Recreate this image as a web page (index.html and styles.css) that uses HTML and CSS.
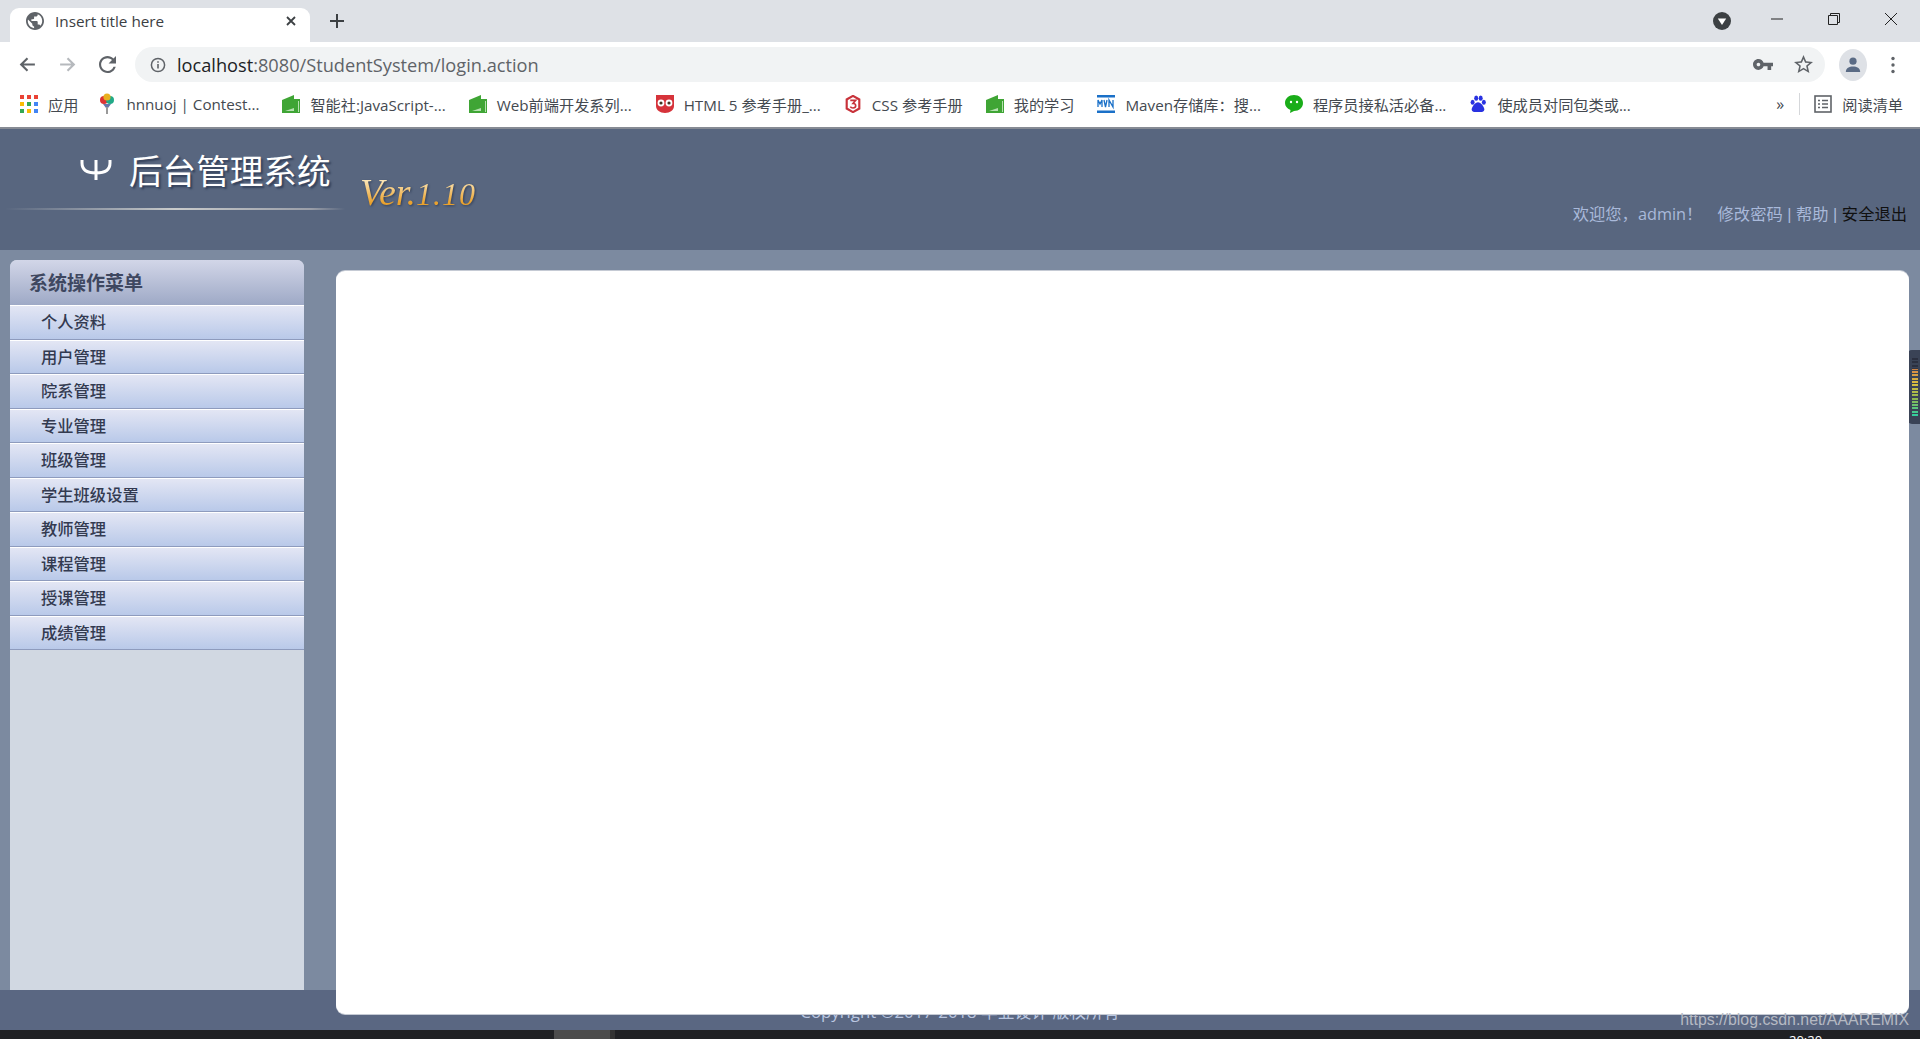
FILE: index.html
```html
<!DOCTYPE html>
<html lang="en">
<head>
    <meta charset="UTF-8">
    <meta name="viewport" content="width=device-width, initial-scale=1.0">
    <title>Insert title here</title>
    <link rel="stylesheet" href="styles.css">
</head>
<body>

    <!-- Browser tabs -->
    <div class="tabStrip">
        <div class="tab">
            <svg class="tabIcon" viewBox="2 2 20 20"><path fill="#5f6368" d="M12 2C6.48 2 2 6.48 2 12s4.48 10 10 10 10-4.48 10-10S17.52 2 12 2zm-1 17.93c-3.95-.49-7-3.85-7-7.93 0-.62.08-1.21.21-1.79L9 15v1c0 1.1.9 2 2 2v1.93zm6.9-2.54c-.26-.81-1-1.39-1.9-1.39h-1v-3c0-.55-.45-1-1-1H8v-2h2c.55 0 1-.45 1-1V7h2c1.1 0 2-.9 2-2v-.41c2.93 1.19 5 4.06 5 7.41 0 2.08-.8 3.97-2.1 5.39z"/></svg>
            <span class="tabTitle">Insert title here</span>
            <svg class="tabClose" viewBox="0 0 12 12"><path d="M2 2l8 8M10 2l-8 8" stroke="#3c4043" stroke-width="1.8"/></svg>
        </div>
        <svg class="newTab" viewBox="0 0 16 16"><path d="M8 1v14M1 8h14" stroke="#3c4043" stroke-width="2"/></svg>
        <div class="tabStripRight">
            <svg class="tabSearch" viewBox="0 0 18 18"><circle cx="9" cy="9" r="9" fill="#3c4043"/><path d="M4.8 6.5h8.4L9 13z" fill="#fff"/></svg>
            <svg class="winBtn" viewBox="0 0 14 14"><path d="M1 7h12" stroke="#222" stroke-width="1"/></svg>
            <svg class="winBtn" viewBox="0 0 14 14"><path d="M1.5 3.5h9v9h-9zM3.5 3.5v-2h9v9h-2" fill="none" stroke="#222" stroke-width="1"/></svg>
            <svg class="winBtn" viewBox="0 0 14 14"><path d="M1 1l12 12M13 1L1 13" stroke="#222" stroke-width="1"/></svg>
        </div>
    </div>

    <!-- Address bar -->
    <div class="toolbar">
        <svg class="navIcon" viewBox="0 0 18 18"><path d="M16 9H3M9 3L3 9l6 6" fill="none" stroke="#5f6368" stroke-width="2"/></svg>
        <svg class="navIcon" viewBox="0 0 18 18"><path d="M2 9h13M9 3l6 6-6 6" fill="none" stroke="#b6b9bd" stroke-width="2"/></svg>
        <svg class="navIcon reload" viewBox="4 4 16 16"><path fill="#5f6368" d="M17.65 6.35C16.2 4.9 14.21 4 12 4c-4.42 0-7.99 3.58-7.99 8s3.57 8 7.99 8c3.73 0 6.84-2.55 7.73-6h-2.08c-.82 2.33-3.04 4-5.65 4-3.31 0-6-2.69-6-6s2.69-6 6-6c1.66 0 3.14.69 4.22 1.78L13 11h7V4l-2.35 2.35z"/></svg>
        <div class="addressBar">
            <svg class="infoIcon" viewBox="0 0 16 16"><circle cx="8" cy="8" r="6.6" fill="none" stroke="#5f6368" stroke-width="1.5"/><path d="M8 7v4.5M8 4.2v1.6" stroke="#5f6368" stroke-width="1.6"/></svg>
            <span class="url"><b>localhost</b>:8080/StudentSystem/login.action</span>
            <svg class="keyIcon" viewBox="1 6 22 12"><path fill="#5f6368" d="M12.65 10C11.83 7.67 9.61 6 7 6c-3.31 0-6 2.69-6 6s2.69 6 6 6c2.61 0 4.83-1.67 5.65-4H17v4h4v-4h2v-4H12.65zM7 14c-1.1 0-2-.9-2-2s.9-2 2-2 2 .9 2 2-.9 2-2 2z"/></svg>
            <svg class="starIcon" viewBox="2 2 20 20"><path fill="#5f6368" d="M22 9.24l-7.19-.62L12 2 9.19 8.63 2 9.24l5.46 4.73L5.82 21 12 17.27 18.18 21l-1.63-7.03L22 9.24zM12 15.4l-3.76 2.27 1-4.28-3.32-2.88 4.38-.38L12 6.1l1.71 4.04 4.38.38-3.32 2.88 1 4.28L12 15.4z"/></svg>
        </div>
        <div class="avatar">
            <svg viewBox="0 0 18 18"><circle cx="9" cy="5.2" r="3.6" fill="#5a6b85"/><path d="M1.8 16c0-4 3.4-5.6 7.2-5.6s7.2 1.6 7.2 5.6z" fill="#5a6b85"/></svg>
        </div>
        <svg class="dots" viewBox="0 0 4 18"><circle cx="2" cy="2.5" r="1.7" fill="#5f6368"/><circle cx="2" cy="9" r="1.7" fill="#5f6368"/><circle cx="2" cy="15.5" r="1.7" fill="#5f6368"/></svg>
    </div>

    <!-- Bookmarks -->
    <div class="bookmarks">
        <a class="mark">
            <svg viewBox="0 0 18 18">
                <rect x="0" y="0" width="4" height="4" fill="#ea4335"/><rect x="7" y="0" width="4" height="4" fill="#ea4335"/><rect x="14" y="0" width="4" height="4" fill="#ea4335"/>
                <rect x="0" y="7" width="4" height="4" fill="#fbbc05"/><rect x="7" y="7" width="4" height="4" fill="#34a853"/><rect x="14" y="7" width="4" height="4" fill="#4285f4"/>
                <rect x="0" y="14" width="4" height="4" fill="#34a853"/><rect x="7" y="14" width="4" height="4" fill="#fbbc05"/><rect x="14" y="14" width="4" height="4" fill="#4285f4"/>
            </svg>
            应用
        </a>
        <a class="mark markOj">
            <svg class="tallIcon" viewBox="0 0 18 22"><circle cx="6" cy="7" r="4" fill="#d33"/><circle cx="12" cy="7" r="4" fill="#2a8"/><circle cx="9" cy="4" r="3.6" fill="#e8b020"/><path d="M5 11h8l-3 4H8z" fill="#67a"/><path d="M9 14v7" stroke="#999" stroke-width="2"/></svg>
            hnnuoj | Contest...
        </a>
        <a class="mark">
            <svg viewBox="0 0 18 18"><path d="M0 5L12 0v4h6v14H0z" fill="#3fa535"/><path d="M16 6h1v11h-1zM3 16l9-3v3z" fill="#b5e0b0"/></svg>
            智能社:JavaScript-...
        </a>
        <a class="mark">
            <svg viewBox="0 0 18 18"><path d="M0 5L12 0v4h6v14H0z" fill="#3fa535"/><path d="M16 6h1v11h-1zM3 16l9-3v3z" fill="#b5e0b0"/></svg>
            Web前端开发系列...
        </a>
        <a class="mark">
            <svg class="wideIcon" viewBox="0 0 20 20"><path d="M1 1h18v11c0 4-4 7-9 7s-9-3-9-7z" fill="#d6333a"/><circle cx="6" cy="9" r="3.4" fill="#fff"/><circle cx="14" cy="9" r="3.4" fill="#fff"/><circle cx="6" cy="9" r="1.6" fill="#432"/><circle cx="14" cy="9" r="1.6" fill="#432"/></svg>
            HTML 5 参考手册_...
        </a>
        <a class="mark">
            <svg viewBox="0 0 18 20"><path d="M9 1l7 4v10l-7 4-7-4V5z" fill="none" stroke="#c8323a" stroke-width="2.4"/><path d="M6 6h6L9 9.5c2 0 3 1 3 2.5s-1.5 2.5-3 2.5-2.5-.5-3-1.5" fill="none" stroke="#c8323a" stroke-width="1.8"/></svg>
            CSS 参考手册
        </a>
        <a class="mark">
            <svg viewBox="0 0 18 18"><path d="M0 5L12 0v4h6v14H0z" fill="#3fa535"/><path d="M16 6h1v11h-1zM3 16l9-3v3z" fill="#b5e0b0"/></svg>
            我的学习
        </a>
        <a class="mark">
            <svg viewBox="0 0 18 18"><rect width="18" height="2.5" fill="#1a70c8"/><rect y="15.5" width="18" height="2.5" fill="#1a70c8"/><path d="M1 12V5l2 4 2-4v7M7 5l1.5 7L10 5M12 12V5l4 7V5" fill="none" stroke="#1a70c8" stroke-width="1.3"/></svg>
            Maven存储库：搜...
        </a>
        <a class="mark">
            <svg class="wideIcon" viewBox="0 0 20 20"><path d="M10 1c5 0 9 3.5 9 8s-4 8-9 8l-4 2 .5-3C3 14.5 1 12 1 9c0-4.5 4-8 9-8z" fill="#1aad19"/><circle cx="7" cy="8" r="1.2" fill="#fff"/><circle cx="13" cy="8" r="1.2" fill="#fff"/></svg>
            程序员接私活必备...
        </a>
        <a class="mark">
            <svg viewBox="0 0 18 20"><ellipse cx="3" cy="8" rx="2.2" ry="2.8" fill="#2932e1"/><ellipse cx="7" cy="3.5" rx="2.2" ry="2.9" fill="#2932e1"/><ellipse cx="12" cy="3.5" rx="2.2" ry="2.9" fill="#2932e1"/><ellipse cx="15.5" cy="8" rx="2.2" ry="2.8" fill="#2932e1"/><path d="M9 8c3 0 7 5 7 8 0 2-2 3-4 3H6c-2 0-4-1-4-3 0-3 4-8 7-8z" fill="#2932e1"/></svg>
            使成员对同包类或...
        </a>
        <div class="markEnd">
            <span class="more">»</span>
            <span class="markSep"></span>
            <a class="mark">
                <svg viewBox="0 0 18 18"><rect x="1" y="1" width="16" height="16" fill="none" stroke="#5f6368" stroke-width="1.6"/><path d="M4 5.5h2M8 5.5h6M4 9h2M8 9h6M4 12.5h2M8 12.5h6" stroke="#5f6368" stroke-width="1.5"/></svg>
                阅读清单
            </a>
        </div>
    </div>

    <!-- Page header -->
    <div class="header">
        <div class="logo">
            <div class="logoTop">
                <svg class="logoMark" viewBox="0 0 32 20"><path d="M2 0v3c0 7 5 10 14 10s14-3 14-10V0M16 0v20" fill="none" stroke="#fff" stroke-width="3"/></svg>
                <span class="logoText">后台管理系统</span>
            </div>
            <div class="logoLine"></div>
        </div>
        <div class="version">Ver.<span class="versionNum">1.10</span></div>
        <div class="userLinks">
            <span class="welcome">欢迎您，admin！</span>
            <span class="links"><a>修改密码</a> | <a>帮助</a> | <a class="logout">安全退出</a></span>
        </div>
    </div>

    <!-- Sidebar and content -->
    <div class="middle">
        <div class="sidebar">
            <div class="menuTitle">系统操作菜单</div>
            <a class="menuItem">个人资料</a>
            <a class="menuItem">用户管理</a>
            <a class="menuItem">院系管理</a>
            <a class="menuItem">专业管理</a>
            <a class="menuItem">班级管理</a>
            <a class="menuItem">学生班级设置</a>
            <a class="menuItem">教师管理</a>
            <a class="menuItem">课程管理</a>
            <a class="menuItem">授课管理</a>
            <a class="menuItem">成绩管理</a>
        </div>
        <div class="content"></div>
    </div>

    <div class="footer">Copyright ©2017-2018 毕业设计 版权所有</div>

    <!-- Windows taskbar, cut off by the bottom of the window -->
    <div class="taskbar">
        <span class="taskActive"></span>
        <span class="taskClock">20:20</span>
    </div>

    <!-- Overlays -->
    <div class="meter"><div class="meterBars"></div></div>
    <div class="watermark">https://blog.csdn.net/AAAREMIX</div>

</body>
</html>
```

FILE: styles.css
```css
html, body {
    height: 100%;
}
body {
    margin: 0;
    display: flex;
    flex-direction: column;
    overflow: hidden;
    font-family: "Open Sans", "Noto Sans CJK SC", sans-serif;
    background-color: #202124;
}

/* browser tabs */
.tabStrip {
    flex: none;
    height: 42px;
    display: flex;
    align-items: flex-end;
    background-color: #dee1e6;
}
.tab {
    width: 300px;
    height: 34px;
    margin-left: 10px;
    display: flex;
    align-items: center;
    box-sizing: border-box;
    padding: 0 13px 8px 16px;
    background-color: #fff;
    border-radius: 9px 9px 0 0;
}
.tabIcon {
    width: 18px;
    height: 18px;
}
.tabTitle {
    flex: 1;
    margin-left: 11px;
    font-size: 15.3px;
    color: #3c4043;
}
.tabClose {
    width: 12px;
    height: 12px;
}
.newTab {
    width: 16px;
    height: 16px;
    margin: 0 0 13px 19px;
}
.tabStripRight {
    flex: 1;
    align-self: stretch;
    display: flex;
    align-items: center;
    justify-content: flex-end;
}
.tabSearch {
    width: 18px;
    height: 18px;
    margin-right: 39px;
}
.winBtn {
    width: 14px;
    height: 14px;
    margin-right: 43px;
    margin-bottom: 4px;
}
.winBtn:last-child {
    margin-right: 22px;
}

/* address bar */
.toolbar {
    flex: none;
    height: 44px;
    display: flex;
    align-items: center;
    padding-left: 18px;
    background-color: #fff;
}
.navIcon {
    width: 19px;
    height: 19px;
    margin-right: 21px;
}
.reload {
    width: 17px;
    height: 17px;
    margin-left: 1px;
}
.addressBar {
    flex: none;
    width: 1690px;
    height: 35px;
    margin: 1px 0 0 -2px;
    display: flex;
    align-items: center;
    box-sizing: border-box;
    padding: 0 12px 0 15px;
    background-color: #f1f3f4;
    border-radius: 18px;
}
.infoIcon {
    width: 16px;
    height: 16px;
}
.url {
    flex: 1;
    margin-left: 11px;
    font-size: 18.2px;
    color: #5f6368;
}
.url b {
    font-weight: normal;
    color: #202124;
}
.keyIcon {
    width: 20px;
    height: 11px;
    margin-right: 21px;
}
.starIcon {
    width: 19px;
    height: 19px;
}
.avatar {
    width: 28px;
    height: 32px;
    margin: 1px 0 0 14px;
    display: flex;
    align-items: center;
    justify-content: center;
    background-color: #dee1e6;
    border-radius: 50%;
}
.avatar svg {
    width: 18px;
    height: 18px;
}
.dots {
    width: 4px;
    height: 18px;
    margin: 1px 0 0 24px;
}

/* bookmarks */
.bookmarks {
    flex: none;
    height: 43px;
    box-sizing: border-box;
    display: flex;
    align-items: center;
    gap: 23px;
    padding: 0 0 5px 20px;
    background-color: #fff;
    border-bottom: 2px solid #868b94;
    font-size: 15.2px;
    color: #444950;
}
.mark {
    flex: none;
    display: flex;
    align-items: center;
    gap: 10px;
    white-space: nowrap;
}
.markOj {
    margin-left: -3px;
}
.mark svg {
    width: 18px;
    height: 18px;
}
.mark .tallIcon {
    height: 22px;
}
.mark .wideIcon {
    width: 20px;
    height: 20px;
    margin-right: -1px;
}
.markEnd {
    flex: 1;
    display: flex;
    align-items: center;
    justify-content: flex-end;
    padding-right: 17px;
}
.more {
    font-size: 16px;
    margin-right: 15px;
}
.markSep {
    width: 1px;
    height: 22px;
    margin-right: 14px;
    background-color: #d5d7da;
}

/* page header */
.header {
    flex: none;
    height: 121px;
    display: flex;
    align-items: flex-start;
    background-color: #58667f;
}
.logo {
    width: 340px;
    margin: 20px 0 0 5px;
}
.logoTop {
    height: 59px;
    display: flex;
    align-items: flex-start;
    padding-left: 75px;
}
.logoMark {
    width: 32px;
    height: 20px;
    margin-top: 11px;
}
.logoText {
    margin-left: 17px;
    font-size: 33.6px;
    line-height: 44px;
    color: #fff;
    text-shadow: 2px 2px 2px #33405a;
}
.logoLine {
    height: 2px;
    background: linear-gradient(to right, transparent, #c9cbcb 50%, #9a9ea8 90%, transparent);
}
.version {
    margin: 40px 0 0 15px;
    font-family: "Liberation Serif", serif;
    font-style: italic;
    font-size: 38px;
    line-height: 46px;
    background: linear-gradient(#fff2d0 15%, #eaa22e 70%);
    -webkit-background-clip: text;
    background-clip: text;
    color: transparent;
    filter: drop-shadow(1px 1px 1px #33405a);
}
.versionNum {
    font-size: 32px;
    letter-spacing: 1px;
}
.userLinks {
    margin: 73px 13px 0 auto;
    font-size: 16.3px;
    line-height: 24px;
    color: #a9b9da;
}
.welcome {
    margin-right: 11px;
}
.links {
    font-family: "Liberation Sans", "Noto Sans CJK SC", sans-serif;
}
.logout {
    color: #101010;
}

/* sidebar and content */
.middle {
    flex: 1;
    min-height: 0;
    display: flex;
    align-items: stretch;
    background-color: #7c8aa0;
}
.sidebar {
    flex: none;
    width: 294px;
    margin: 10px 0 0 10px;
    background-color: #d1d8e2;
    border-radius: 7px 7px 0 0;
}
.menuTitle {
    height: 45px;
    box-sizing: border-box;
    padding-left: 19px;
    font-size: 19px;
    font-weight: bold;
    line-height: 47px;
    color: #3e4760;
    background: linear-gradient(#d2d6e8, #9ea9c6);
    border-radius: 7px 7px 0 0;
}
.menuItem {
    display: block;
    height: 34.5px;
    box-sizing: border-box;
    padding-left: 31px;
    font-size: 16.3px;
    font-weight: 500;
    line-height: 33px;
    color: #333a50;
    background: linear-gradient(#e3e6f4, #b9c9e9);
    border-top: 1px solid #fff;
    border-bottom: 1px solid #8e9bbd;
}
.content {
    flex: none;
    position: relative;
    z-index: 1;
    width: 1573px;
    margin: 21px 0 -24px 32px;
    background-color: #fff;
    border-radius: 9px;
    box-shadow: 0 1px 0 #c5cad4, 0 -1px 0 #c5cad4;
}

/* footer */
.footer {
    flex: none;
    height: 40px;
    font-size: 16.8px;
    line-height: 44px;
    text-align: center;
    color: #b9c6e0;
    background-color: #5a6782;
}

/* taskbar */
.taskbar {
    flex: none;
    height: 9px;
    position: relative;
    overflow: hidden;
    background-color: #202124;
}
.taskActive {
    display: block;
    width: 56px;
    height: 9px;
    margin-left: 554px;
    background-color: #4c4c4c;
    border-right: 5px solid #333;
}
.taskClock {
    position: absolute;
    left: 1789px;
    top: 4px;
    font-size: 13px;
    line-height: 13px;
    color: #fff;
}

/* overlays */
.meter {
    position: absolute;
    left: 1907px;
    top: 350px;
    width: 13px;
    height: 74px;
    background-color: #3a4356;
    border-radius: 5px 0 0 5px;
}
.meterBars {
    width: 6px;
    height: 58px;
    margin: 8px 0 0 5px;
    background:
        repeating-linear-gradient(transparent 0, transparent 2px, #3a4356 2px, #3a4356 3.3px),
        linear-gradient(#2b3040 0, #2b3040 18%, #d88a45 20%, #d8c040 45%, #8fb850 70%, #2fd0a0 100%);
}
.watermark {
    position: absolute;
    z-index: 2;
    right: 11px;
    top: 1010px;
    font-family: "Liberation Sans", sans-serif;
    font-size: 15.9px;
    line-height: 20px;
    color: #b5b9c2;
}
```
